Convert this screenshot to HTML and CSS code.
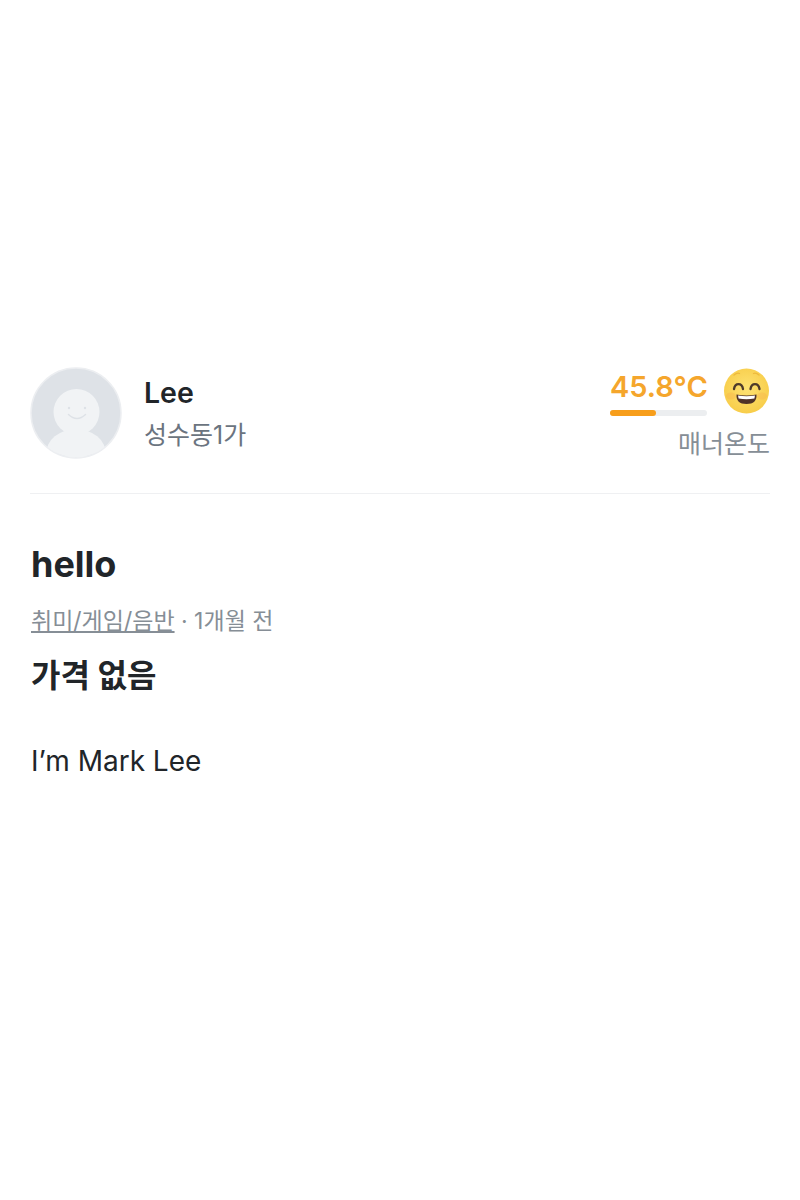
FILE: index.html
```html
<!DOCTYPE html>
<html lang="ko">
<head>
    <meta charset="UTF-8">
    <meta name="viewport" content="width=device-width, initial-scale=1.0">
    <title>hello</title>
    <link rel="stylesheet" href="styles.css">
</head>
<body>

<div class="container">
    <section class="profile">
        <div class="user">
            <svg class="avatar" width="92" height="92" viewBox="0 0 92 92">
                <defs>
                    <clipPath id="avatarClip"><circle cx="46" cy="46" r="44.5"/></clipPath>
                </defs>
                <circle cx="46" cy="46" r="45" fill="#dee2e7" stroke="#eceef1" stroke-width="1.5"/>
                <g clip-path="url(#avatarClip)" fill="#f1f3f5">
                    <circle cx="46.500" cy="45" r="23"/>
                    <ellipse cx="46" cy="87" rx="30" ry="25"/>
                </g>
                <!-- smile -->
                <circle cx="39" cy="41" r="1.200" fill="#dee2e7"/>
                <circle cx="55" cy="41" r="1.200" fill="#dee2e7"/>
                <path d="M38.500 47.500q8.500 8 17 0" fill="none" stroke="#dee2e7" stroke-width="1.500" stroke-linecap="round"/>
            </svg>
            <div class="user-info">
                <div class="name">Lee</div>
                <div class="region">성수동1가</div>
            </div>
        </div>
        <div class="manner">
            <div class="manner-top">
                <div class="temp">
                    <div class="temp-value">45.8°C</div>
                    <div class="temp-bar"><div class="temp-fill" style="width: 47%"></div></div>
                </div>
                <svg class="face" width="48" height="48" viewBox="0 0 48 48">
                    <defs>
                        <radialGradient id="faceFill" cx="50%" cy="45%" r="55%">
                            <stop offset="0" stop-color="#fde272"/>
                            <stop offset="1" stop-color="#f8cd4a"/>
                        </radialGradient>
                    </defs>
                    <circle cx="24.500" cy="24" r="22.500" fill="url(#faceFill)"/>
                    <ellipse cx="9" cy="29" rx="5" ry="3.500" fill="#f7b04e" opacity="0.35"/>
                    <ellipse cx="40" cy="29" rx="5" ry="3.500" fill="#f7b04e" opacity="0.35"/>
                    <path d="M12 8q3-2.500 5.500-1.500M37 8q-3-2.500-5.500-1.500" fill="none" stroke="#eeb93e" stroke-width="1.300" stroke-linecap="round"/>
                    <path d="M12 22c1-6.500 8-6.500 9 0M28.500 22c1-6.500 8-6.500 9 0" fill="none" stroke="#4f3b2a" stroke-width="2.300" stroke-linecap="round"/>
                    <path d="M14.500 27.500q10 2 20 0q.5 9.500-10 9.500t-10-9.500z" fill="#4f3228"/>
                    <path d="M16 28.500q8.500 1.500 17 0l-.6 3q-8 1.400-15.800 0z" fill="#fff"/>
                </svg>
            </div>
            <div class="manner-label">매너온도</div>
        </div>
    </section>

    <section class="post">
        <h1 class="title">hello</h1>
        <div class="meta"><a class="category" href="#">취미/게임/음반</a> · 1개월 전</div>
        <div class="price">가격 없음</div>
        <p class="body-text">I’m Mark Lee</p>
    </section>
</div>

</body>
</html>
```

FILE: styles.css
```css
body {
    font-family: Inter, "Noto Sans CJK KR", sans-serif;
    margin: 0;
    padding: 0;
    background-color: #fff;
    color: #212529;
}

.container {
    padding: 367px 30px 0;
}

.profile {
    display: flex;
    justify-content: space-between;
    padding-bottom: 34px;
    border-bottom: 1px solid #eff0f2;
}

.user {
    display: flex;
    align-items: center;
    gap: 22px;
}

.avatar {
    display: block;
}

.user-info {
    padding-top: 2px;
}

.name {
    font-size: 28.500px;
    font-weight: 600;
    line-height: 40px;
}

.region {
    font-size: 25px;
    line-height: 40px;
    margin-top: 2px;
    color: #6b7480;
}

.manner {
    display: flex;
    flex-direction: column;
    align-items: flex-end;
}

.manner-top {
    display: flex;
    align-items: flex-start;
    gap: 15px;
}

.temp {
    width: 97px;
    padding-top: 3px;
}

.temp-value {
    font-size: 29px;
    font-weight: 600;
    line-height: 34px;
    color: #f5a62c;
    white-space: nowrap;
}

.temp-bar {
    height: 6px;
    margin-top: 6px;
    border-radius: 3px;
    background: #eceef0;
}

.temp-fill {
    height: 100%;
    border-radius: 3px;
    background: #f79e1b;
}

.face {
    display: block;
}

.manner-label {
    font-size: 25px;
    line-height: 36px;
    margin-top: 10px;
    margin-bottom: -9px;
    color: #868e96;
}

.post {
    padding-left: 1px;
}

.title {
    margin: 46px 0 0;
    font-size: 36px;
    font-weight: 700;
    line-height: 48px;
}

.meta {
    margin-top: 16px;
    font-size: 23px;
    line-height: 34px;
    color: #868e96;
}

.category {
    color: #868e96;
    text-decoration: underline;
}

.price {
    margin-top: 17px;
    font-size: 32px;
    font-weight: 700;
    line-height: 42px;
}

.body-text {
    margin: 44px 0 0;
    font-size: 28px;
    line-height: 40px;
}
```
